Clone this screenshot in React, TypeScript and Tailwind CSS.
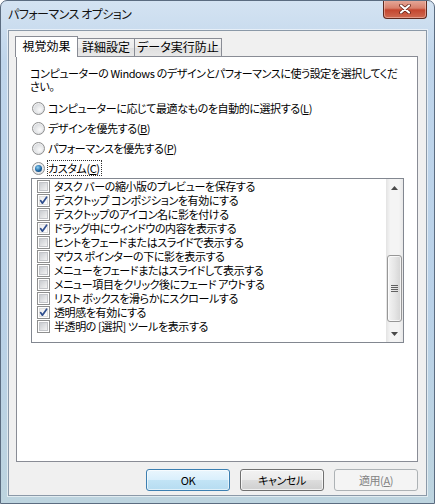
import React from 'react';

// Windows 7 "パフォーマンス オプション" dialog

const items = [
  { label: 'タスク バーの縮小版のプレビューを保存する', on: false },
  { label: 'デスクトップ コンポジションを有効にする', on: true },
  { label: 'デスクトップのアイコン名に影を付ける', on: false },
  { label: 'ドラッグ中にウィンドウの内容を表示する', on: true },
  { label: 'ヒントをフェードまたはスライドで表示する', on: false },
  { label: 'マウス ポインターの下に影を表示する', on: false },
  { label: 'メニューをフェードまたはスライドして表示する', on: false },
  { label: 'メニュー項目をクリック後にフェード アウトする', on: false },
  { label: 'リスト ボックスを滑らかにスクロールする', on: false },
  { label: '透明感を有効にする', on: true },
  { label: '半透明の [選択] ツールを表示する', on: false },
];

const Key = ({ k }: { k: string }) => <span className="underline underline-offset-[1px]">{k}</span>;

function Radio({ on }: { on?: boolean }) {
  return (
    <span className="flex h-[13px] w-[13px] shrink-0 items-center justify-center rounded-full border border-[#8e8f8f] bg-[radial-gradient(circle_at_40%_35%,#ffffff,#d4d6da)]">
      {on ? (
        <span className="h-[7px] w-[7px] rounded-full bg-[radial-gradient(circle_at_40%_35%,#8fd3f5,#1d65a2_55%,#0d3a64)]" />
      ) : (
        <span className="h-[9px] w-[9px] rounded-full bg-[radial-gradient(circle_at_65%_65%,#fbfbfb,#cfd2d6)]" />
      )}
    </span>
  );
}

function Check({ on }: { on?: boolean }) {
  return (
    <span className="relative flex h-[13px] w-[13px] shrink-0 items-center justify-center border border-[#8e8f8f] bg-white">
      <span
        className={
          on
            ? 'h-[9px] w-[9px] border border-[#dedede] bg-gradient-to-br from-[#ececec] to-white'
            : 'h-[9px] w-[9px] border border-[#c3c5c9] bg-gradient-to-br from-[#c9ccd1] to-[#f3f3f3]'
        }
      />
      {on && (
        <svg className="absolute left-0 top-0" width="11" height="11" viewBox="0 0 11 11">
          <path d="M2.6 5.6 L4.4 8.2 L8.6 2.2" fill="none" stroke="#31508f" strokeWidth="1.7" strokeLinecap="round" strokeLinejoin="round" />
        </svg>
      )}
    </span>
  );
}

function ScrollBar() {
  return (
    <div className="flex w-[17px] shrink-0 flex-col bg-[linear-gradient(to_right,#e3e3e3,#f4f4f4_25%,#f4f4f4_75%,#e8e8e8)]">
      <div className="flex h-[17px] items-center justify-center">
        <svg width="7" height="4" viewBox="0 0 7 4">
          <path d="M0 4 L3.5 0 L7 4 Z" fill="#4a4a4a" />
        </svg>
      </div>
      <div className="h-[59px]" />
      <div className="mx-[1px] flex h-[67px] items-center justify-center rounded-[3px] border border-[#979797] bg-[linear-gradient(to_right,#f4f4f4,#e6e6e6_50%,#d4d4d4)] shadow-[inset_0_0_0_1px_rgba(255,255,255,0.7)]">
        <div className="flex flex-col gap-[1px]">
          <span className="h-px w-[7px] bg-[#616161]" />
          <span className="h-px w-[7px] bg-[#616161]" />
          <span className="h-px w-[7px] bg-[#616161]" />
          <span className="h-px w-[7px] bg-[#616161]" />
        </div>
      </div>
      <div className="flex-1" />
      <div className="flex h-[17px] items-center justify-center">
        <svg width="7" height="4" viewBox="0 0 7 4">
          <path d="M0 0 L7 0 L3.5 4 Z" fill="#4a4a4a" />
        </svg>
      </div>
    </div>
  );
}

function Tab({ label, active, className }: { label: string; active?: boolean; className: string }) {
  return (
    <div
      className={
        active
          ? `relative z-10 -mb-px flex h-[21px] items-start justify-center border border-b-0 border-[#898c95] bg-white pt-[2px] text-[12px] tracking-normal ${className}`
          : `flex h-[18px] items-start justify-center border border-l-0 border-b-0 border-[#898c95] bg-[linear-gradient(#f3f3f3,#ebebeb_50%,#dedede_50%,#e8e8e8)] pt-[1px] text-[12px] tracking-normal ${className}`
      }
    >
      {label}
    </div>
  );
}

export default function App() {
  return (
    <div className="h-[504px] w-[435px] overflow-hidden rounded-t-[7px] border border-[#5b6c80] bg-[linear-gradient(to_bottom,#d4e3f2,#bfd5eb_12%,#b9d1e8_60%,#bdd4df)] font-['Noto_Sans_CJK_JP',sans-serif] text-[11px] leading-[14px] tracking-[-0.4px] text-black [font-feature-settings:'palt']">
      {/* title bar */}
      <div className="flex h-[29px] items-start justify-between pl-[7px] pr-[7px]">
        <div className="pt-[6px] text-[12px] tracking-[-0.5px] text-[#111]">パフォーマンス オプション</div>
        <div className="-mt-px flex h-[19px] w-[44px] items-center justify-center rounded-b-[4px] border border-t-0 border-[#5e2a20] bg-[linear-gradient(#e6ab9c,#d8806c_45%,#c4462f_55%,#cf6a52)] shadow-[inset_0_0_0_1px_rgba(255,220,210,0.45)]">
          <svg width="12" height="10" viewBox="0 0 12 10">
            <path d="M2 1.5 L10 8.5 M10 1.5 L2 8.5" stroke="#5a1a10" strokeWidth="3.6" strokeLinecap="round" />
            <path d="M2 1.5 L10 8.5 M10 1.5 L2 8.5" stroke="#ffffff" strokeWidth="2.2" strokeLinecap="round" />
          </svg>
        </div>
      </div>

      {/* client area */}
      <div className="ml-[7px] flex h-[466px] w-[419px] flex-col border border-[#8b99a8] bg-[#f0f0f0] shadow-[0_0_0_1px_rgba(255,255,255,0.55)]">
        {/* tabs */}
        <div className="flex items-end pl-[6px] pt-[5px]">
          <Tab label="視覚効果" active className="w-[63px]" />
          <Tab label="詳細設定" className="w-[57px]" />
          <Tab label="データ実行防止" className="w-[87px]" />
        </div>

        {/* tab panel */}
        <div className="ml-[7px] flex h-[406px] w-[402px] flex-col border border-[#898c95] bg-white">
          <div className="pl-[13px] pt-[10px] leading-[13px]">
            <div className="whitespace-nowrap">コンピューターの Windows のデザインとパフォーマンスに使う設定を選択してくだ</div>
            <div>さい。</div>
          </div>

          <div className="mt-[5px] flex flex-col">
            <div className="flex h-[20px] items-center gap-[3px] pl-[15px]">
              <Radio />
              <span>コンピューターに応じて最適なものを自動的に選択する(<Key k="L" />)</span>
            </div>
            <div className="flex h-[20px] items-center gap-[3px] pl-[15px]">
              <Radio />
              <span>デザインを優先する(<Key k="B" />)</span>
            </div>
            <div className="flex h-[20px] items-center gap-[3px] pl-[15px]">
              <Radio />
              <span>パフォーマンスを優先する(<Key k="P" />)</span>
            </div>
            <div className="flex h-[20px] items-center gap-[3px] pl-[15px]">
              <Radio on />
              <span className="pr-[1px] outline-1 outline-dotted outline-[#333]">カスタム(<Key k="C" />)</span>
            </div>
          </div>

          {/* list box */}
          <div className="ml-[14px] flex h-[165px] w-[373px] border border-[#828790] bg-white">
            <div className="flex flex-1 flex-col">
              {items.map((it) => (
                <div key={it.label} className="flex h-[14px] items-center gap-[4px] pl-[5px] whitespace-nowrap">
                  <Check on={it.on} />
                  <span>{it.label}</span>
                </div>
              ))}
            </div>
            <ScrollBar />
          </div>
        </div>

        {/* buttons */}
        <div className="mt-[7px] flex justify-end gap-[10px] pr-[8px]">
          <button className="h-[22px] w-[84px] rounded-[3px] border border-[#3c7fb1] bg-[linear-gradient(#eaf6fd,#d9effc_50%,#c2e4f6_50%,#b6dcf1)] shadow-[inset_0_0_0_1px_rgba(255,255,255,0.6)]">
            OK
          </button>
          <button className="h-[22px] w-[84px] rounded-[3px] border border-[#707070] bg-[linear-gradient(#f2f2f2,#ebebeb_50%,#dddddd_50%,#cfcfcf)] shadow-[inset_0_0_0_1px_rgba(255,255,255,0.7)]">
            キャンセル
          </button>
          <button className="h-[22px] w-[84px] rounded-[3px] border border-[#adb2b5] bg-[#f4f4f4] text-[#838383]">
            適用(<Key k="A" />)
          </button>
        </div>
      </div>
    </div>
  );
}
